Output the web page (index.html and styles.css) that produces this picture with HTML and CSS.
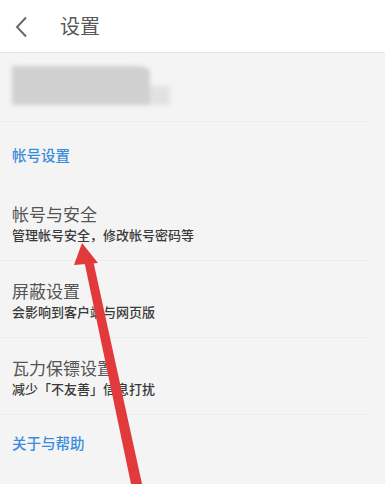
FILE: index.html
```html
<!DOCTYPE html>
<html lang="zh-CN">
<head>
<meta charset="utf-8">
<title>设置</title>
<link rel="stylesheet" href="styles.css">
</head>
<body>
<div class="page">
  <header class="topbar">
    <svg class="back" width="14" height="22" viewBox="0 0 14 22"><polyline points="11,1.5 2,11 11,20.5" fill="none" stroke="#6a6a6a" stroke-width="2"/></svg>
    <span class="title">设置</span>
  </header>
  <div class="profile">
    <div class="blur-wrap">
      <div class="blur-main"></div>
      <div class="blur-ext"></div>
    </div>
  </div>
  <div class="label first">帐号设置</div>
  <div class="item">
    <div class="item-title">帐号与安全</div>
    <div class="item-sub">管理帐号安全，修改帐号密码等</div>
  </div>
  <div class="item">
    <div class="item-title">屏蔽设置</div>
    <div class="item-sub">会影响到客户端与网页版</div>
  </div>
  <div class="item">
    <div class="item-title">瓦力保镖设置</div>
    <div class="item-sub">减少「不友善」信息打扰</div>
  </div>
  <div class="label last">关于与帮助</div>
  <svg class="arrow" width="385" height="484" viewBox="0 0 385 484">
    <polygon points="82,243 74,265 98,263" fill="#e2393c"/>
    <polygon points="84,260 93,260 142,484 131,484" fill="#e2393c"/>
  </svg>
</div>
</body>
</html>
```

FILE: styles.css
```css
html, body {
  margin: 0;
  padding: 0;
}
body {
  background: #f4f4f4;
  font-family: "Noto Sans CJK SC", "Noto Sans", sans-serif;
  width: 385px;
  height: 484px;
  overflow: hidden;
}
.page {
  position: relative;
  height: 484px;
  overflow: hidden;
}
.topbar {
  height: 53px;
  box-sizing: border-box;
  background: #fff;
  border-bottom: 1px solid #e4e4e4;
  display: flex;
  align-items: center;
}
.back {
  margin-left: 15px;
  margin-top: 1px;
}
.title {
  margin-left: 31px;
  font-size: 20px;
  color: #585858;
  line-height: 24px;
}
.profile {
  height: 69px;
  border-bottom: 1px solid #ececec;
  margin-right: 17px;
  padding-left: 12px;
  padding-top: 13px;
  box-sizing: border-box;
}
.blur-wrap {
  position: relative;
  width: 160px;
  height: 40px;
  filter: blur(2px);
}
.blur-main {
  width: 138px;
  height: 39px;
  background: #d0d0d0;
  border-top-right-radius: 14px 6px;
}
.blur-ext {
  position: absolute;
  left: 138px;
  top: 20px;
  width: 20px;
  height: 19px;
  background: #e2e2e2;
}
.label {
  color: #3a8cdc;
  font-size: 14.5px;
  font-weight: 500;
  line-height: 20px;
  padding-left: 12px;
}
.label.first {
  padding-top: 23px;
  padding-bottom: 19px;
}
.label.last {
  padding-top: 18px;
}
.item {
  padding: 19px 0 15px 12px;
  margin-right: 17px;
  border-bottom: 1px solid #ececec;
}
.item-title {
  font-size: 17px;
  line-height: 22px;
  color: #555;
}
.item-sub {
  font-size: 13px;
  line-height: 20px;
  color: #3a3a3a;
  font-weight: 500;
}
.arrow {
  position: absolute;
  left: 0;
  top: 0;
  filter: blur(0.5px);
}
```
